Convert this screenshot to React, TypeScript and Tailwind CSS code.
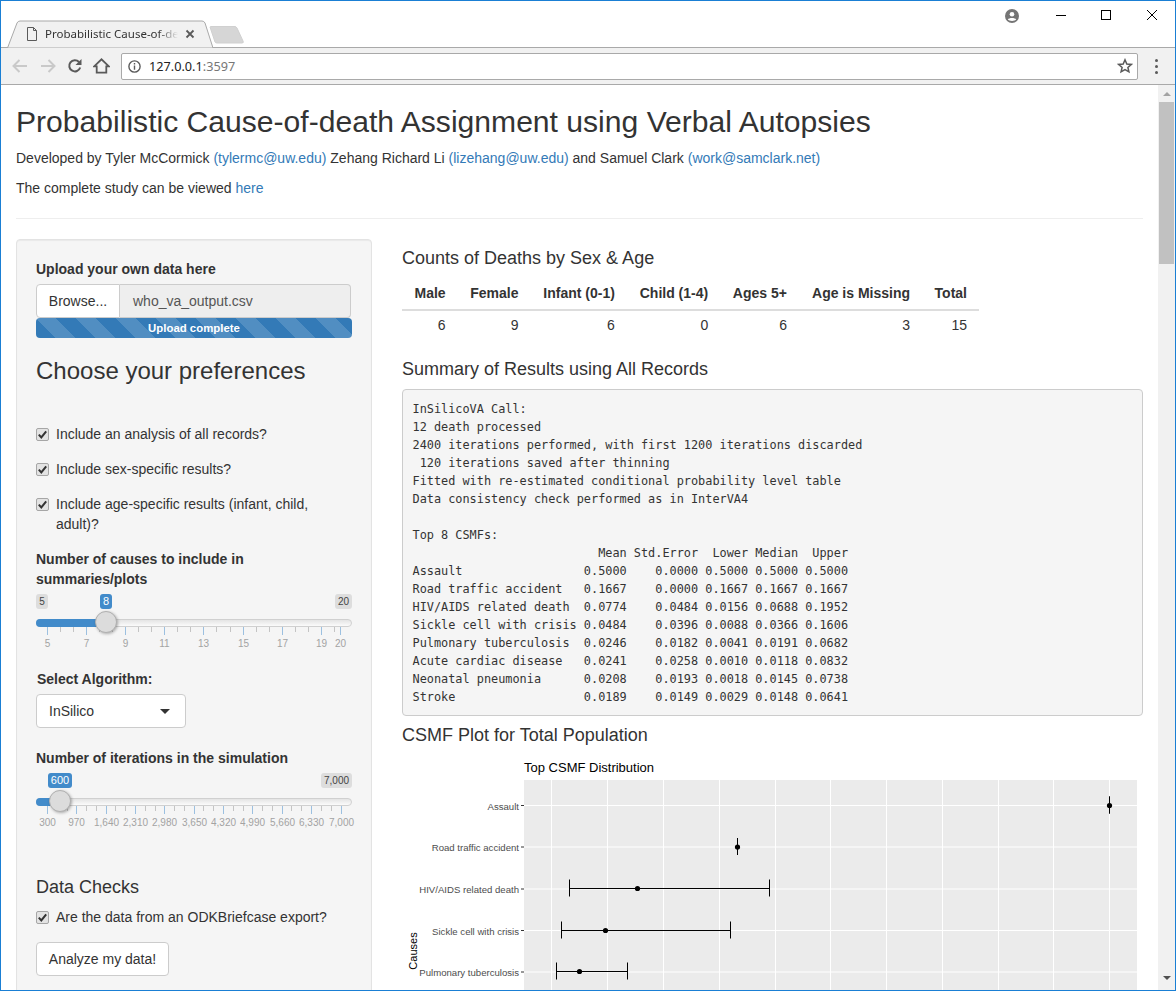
import React from "react";

const sans = "font-['Liberation_Sans',Arial,sans-serif]";

function Check({ label }: { label: React.ReactNode }) {
  return (
    <div className="flex items-start text-sm leading-5 text-[#333]">
      <span className="mt-1 mr-[7px] flex h-[13px] w-[13px] shrink-0 items-center justify-center rounded-[2px] border border-[#a6a6a6] bg-[#e3e3e3]">
        <svg viewBox="0 0 11 11" className="h-[11px] w-[11px]">
          <path d="M1.8 5.6 L4.3 8.4 L9.2 2.4" fill="none" stroke="#333" strokeWidth="2" />
        </svg>
      </span>
      <span>{label}</span>
    </div>
  );
}

type Mark = { x: number; t: string };

function Slider({
  minLabel,
  maxLabel,
  minW,
  maxW,
  val,
  valX,
  valW,
  handle,
  marks,
  minors,
}: {
  minLabel: string;
  maxLabel: string;
  minW: number;
  maxW: number;
  val: string;
  valX: number;
  valW: number;
  handle: number;
  marks: Mark[];
  minors: number[];
}) {
  return (
    <div className="relative h-[58px] w-[316px] text-[10px] leading-[15px]">
      {minLabel && <span className="absolute left-0 top-0 rounded-[3px] bg-[#ddd] text-center text-[#444]" style={{ width: minW }}>{minLabel}</span>}
      <span className="absolute right-0 top-0 rounded-[3px] bg-[#ddd] text-center text-[#444]" style={{ width: maxW }}>{maxLabel}</span>
      <span className="absolute top-0 rounded-[3px] bg-[#428bca] text-center text-[11px] text-white" style={{ left: valX, width: valW }}>{val}</span>
      <div className="absolute left-0 right-0 top-[25px] h-2 rounded-[4px] border border-[#d0d0d0] bg-gradient-to-b from-[#e4e4e4] to-[#fbfbfb]" />
      <div className="absolute left-0 top-[25px] h-2 rounded-l-[4px] bg-[#428bca]" style={{ width: handle }} />
      {minors.map((x) => (
        <div key={x} className="absolute top-[33px] h-[5px] w-px bg-[#c4c4c4]" style={{ left: x }} />
      ))}
      {marks.map((m) => (
        <React.Fragment key={m.t}>
          <div className="absolute top-[33px] h-2 w-px bg-[#9cc0e0]" style={{ left: m.x }} />
          <span className="absolute top-[42px] w-10 -translate-x-1/2 text-center text-[#a3a3a3]" style={{ left: m.x + 0.5 }}>{m.t}</span>
        </React.Fragment>
      ))}
      <div
        className="absolute top-[17px] h-[22px] w-[22px] -translate-x-1/2 rounded-full border border-[#b0b0b0] bg-[#dcdcdc] shadow-[1px_1px_3px_rgba(0,0,0,0.3)]"
        style={{ left: handle }}
      />
    </div>
  );
}

const m1: Mark[] = [
  { x: 11, t: "5" },
  { x: 50, t: "7" },
  { x: 89, t: "9" },
  { x: 128, t: "11" },
  { x: 167, t: "13" },
  { x: 207, t: "15" },
  { x: 246, t: "17" },
  { x: 285, t: "19" },
  { x: 304, t: "20" },
];
const m1Minor = [24, 37, 63, 76, 102, 115, 141, 154, 180, 194, 220, 233, 259, 272, 298];
const m2Labels = ["300", "970", "1,640", "2,310", "2,980", "3,650", "4,320", "4,990", "5,660", "6,330", "7,000"];
const m2: Mark[] = m2Labels.map((t, i) => ({ x: Math.round(11 + i * 29.35), t }));
const m2Minor = Array.from({ length: 30 }, (_, i) => Math.round(11 + (i + 1) * 9.78)).filter((_, i) => (i + 1) % 3 !== 0);

const rows = [
  "InSilicoVA Call:",
  "12 death processed",
  "2400 iterations performed, with first 1200 iterations discarded",
  " 120 iterations saved after thinning",
  "Fitted with re-estimated conditional probability level table",
  "Data consistency check performed as in InterVA4",
  "",
  "Top 8 CSMFs:",
  "                          Mean Std.Error  Lower Median  Upper",
  "Assault                 0.5000    0.0000 0.5000 0.5000 0.5000",
  "Road traffic accident   0.1667    0.0000 0.1667 0.1667 0.1667",
  "HIV/AIDS related death  0.0774    0.0484 0.0156 0.0688 0.1952",
  "Sickle cell with crisis 0.0484    0.0396 0.0088 0.0366 0.1606",
  "Pulmonary tuberculosis  0.0246    0.0182 0.0041 0.0191 0.0682",
  "Acute cardiac disease   0.0241    0.0258 0.0010 0.0118 0.0832",
  "Neonatal pneumonia      0.0208    0.0193 0.0018 0.0145 0.0738",
  "Stroke                  0.0189    0.0149 0.0029 0.0148 0.0641",
].join("\n");

const headers = ["Male", "Female", "Infant (0-1)", "Child (1-4)", "Ages 5+", "Age is Missing", "Total"];
const values = ["6", "9", "6", "0", "6", "3", "15"];

function Chart() {
  const ox = 402;
  const oy = 755;
  const vs = [551, 607, 663, 719, 775, 830, 886, 942, 998, 1053, 1109];
  const hs = [805.5, 847, 889, 930.5, 972];
  const labels = ["Assault", "Road traffic accident", "HIV/AIDS related death", "Sickle cell with crisis", "Pulmonary tuberculosis"];
  const bars = [
    { y: 805.5, a: 1109.5, b: 1109.5, p: 1109.5 },
    { y: 847, a: 737.5, b: 737.5, p: 737.5 },
    { y: 888.5, a: 569.5, b: 769.5, p: 637.5 },
    { y: 930.5, a: 561.5, b: 730.5, p: 605.5 },
    { y: 971.5, a: 556.5, b: 627.5, p: 579.5 },
  ];
  return (
    <svg width="741" height="236" viewBox={`${ox} ${oy} 741 236`} className="block">
      <text x="524" y="772" fontSize="13" fill="#000" fontFamily="Liberation Sans">Top CSMF Distribution</text>
      <rect x="524" y="780" width="613" height="220" fill="#ebebeb" />
      {vs.map((x) => (
        <line key={x} x1={x + 0.5} x2={x + 0.5} y1="780" y2="1000" stroke="#fff" strokeWidth="1" />
      ))}
      {hs.map((y) => (
        <line key={y} x1="524" x2="1137" y1={y} y2={y} stroke="#fff" strokeWidth="1" />
      ))}
      {hs.map((y, i) => (
        <g key={i}>
          <line x1="521" x2="524" y1={y} y2={y} stroke="#333" strokeWidth="1" />
          <text x="519" y={y + 4} textAnchor="end" fontSize="9.6" fill="#4d4d4d" fontFamily="Liberation Sans">{labels[i]}</text>
        </g>
      ))}
      <text transform="translate(417,951) rotate(-90)" textAnchor="middle" fontSize="11" fill="#000" fontFamily="Liberation Sans">Causes</text>
      {bars.map((b, i) => (
        <g key={i} stroke="#000" fill="#000">
          <line x1={b.a} x2={b.b} y1={b.y} y2={b.y} strokeWidth="1" />
          <line x1={b.a} x2={b.a} y1={b.y - 9} y2={b.y + 8} strokeWidth="1" />
          <line x1={b.b} x2={b.b} y1={b.y - 9} y2={b.y + 8} strokeWidth="1" />
          <circle cx={b.p} cy={b.y} r="2.6" stroke="none" />
        </g>
      ))}
    </svg>
  );
}

function BrowserChrome() {
  return (
    <div className="shrink-0">
      <div className="relative flex h-[46px] items-end bg-white">
        <div className="relative ml-[6px] flex h-[27px] w-[206px] items-center">
          <svg className="absolute inset-0" width="206" height="28" viewBox="0 0 206 28">
            <path d="M0.5 28 L10 3 Q11 1 13 1 L195 1 Q197 1 198 3 L206 28 Z" fill="#f1f1f1" stroke="#a9a9a9" strokeWidth="1" />
          </svg>
          <svg className="relative ml-[19px]" width="12" height="14" viewBox="0 0 12 14" fill="none" stroke="#5a5a5a" strokeWidth="1">
            <path d="M1.5 0.5 H7.5 L10.5 3.5 V13.5 H1.5 Z M7.5 0.5 V3.5 H10.5" />
          </svg>
          <span className="relative ml-[7px] w-[133px] overflow-hidden whitespace-nowrap font-['Noto_Sans',sans-serif] text-[11.5px] leading-[20px] text-[#333] [mask-image:linear-gradient(to_right,black_85%,transparent)]">
            Probabilistic Cause-of-de
          </span>
          <svg className="relative ml-[7px]" width="10" height="10" viewBox="0 0 10 10" stroke="#5a5a5a" strokeWidth="1.8">
            <path d="M1.5 1.5 L8.5 8.5 M8.5 1.5 L1.5 8.5" />
          </svg>
        </div>
        <svg className="ml-[-4px] mb-[3px]" width="36" height="18" viewBox="0 0 36 18">
          <path d="M1 1 Q1 0.5 2 0.5 L26 0.5 Q27 0.5 28 2 L34 15 Q35 17 33 17 L8 17 Q6.5 17 6 16 Z" fill="#d6d6d6" stroke="#d0d0d0" />
        </svg>
        <div className="absolute right-[156px] top-[8px]">
          <svg width="14" height="14" viewBox="0 0 14 14">
            <circle cx="7" cy="7" r="7" fill="#757575" />
            <circle cx="7" cy="5.2" r="2.3" fill="#fff" />
            <path d="M2.8 10.6 C4 8.6 10 8.6 11.2 10.6 C10 12.3 4 12.3 2.8 10.6 Z" fill="#fff" />
          </svg>
        </div>
        <svg className="absolute right-[17px] top-[9px]" width="102" height="11" viewBox="0 0 102 11" fill="none" stroke="#000" strokeWidth="1">
          <path d="M0 5.5 H10" />
          <rect x="45.5" y="0.5" width="9" height="9" />
          <path d="M91 0 L101 10 M101 0 L91 10" />
        </svg>
      </div>
      <div className="flex h-[38px] items-center border-t border-b border-t-[#a9a9a9] border-b-[#a9a9a9] bg-[#f1f1f1]">
        <svg className="ml-[10px]" width="18" height="16" viewBox="0 0 18 16" fill="none" stroke="#c9c9c9" strokeWidth="2">
          <path d="M16 8 H3 M8.5 2 L2.5 8 L8.5 14" />
        </svg>
        <svg className="ml-[10px]" width="18" height="16" viewBox="0 0 18 16" fill="none" stroke="#c9c9c9" strokeWidth="2">
          <path d="M2 8 H15 M9.5 2 L15.5 8 L9.5 14" />
        </svg>
        <svg className="ml-[10px]" width="16" height="16" viewBox="0 0 16 16" fill="none">
          <path d="M13.2 9.5 A5.6 5.6 0 1 1 12 4" stroke="#5a5a5a" strokeWidth="2" />
          <path d="M14.5 1 V7 H8.5 Z" fill="#5a5a5a" />
        </svg>
        <svg className="ml-[10px]" width="17" height="16" viewBox="0 0 17 16" fill="none" stroke="#5a5a5a" strokeWidth="1.8">
          <path d="M1.2 8.3 L8.5 1.3 L15.8 8.3 H13.3 V14.6 H3.7 V8.3 Z" strokeLinejoin="miter" />
        </svg>
        <div className="ml-[11px] flex h-[27px] w-[1017px] items-center rounded-[2px] border border-[#a9a9a9] bg-white">
          <svg className="ml-[6px]" width="13" height="13" viewBox="0 0 13 13" fill="none" stroke="#5a5a5a" strokeWidth="1.4">
            <circle cx="6.5" cy="6.5" r="5.6" />
            <path d="M6.5 5.5 V9.8 M6.5 3 V4.4" />
          </svg>
          <span className="ml-[8px] font-['Noto_Sans',sans-serif] text-[12.7px] text-[#222]">
            127.0.0.1<span className="text-[#777]">:3597</span>
          </span>
          <svg className="ml-auto mr-[4px]" width="16" height="16" viewBox="0 0 16 16" fill="none" stroke="#5a5a5a" strokeWidth="1.5">
            <path d="M8 1.8 L9.8 6 L14.3 6.4 L10.9 9.4 L11.9 13.8 L8 11.5 L4.1 13.8 L5.1 9.4 L1.7 6.4 L6.2 6 Z" />
          </svg>
        </div>
        <div className="ml-[17px] flex flex-col gap-[3px]">
          <span className="h-[3px] w-[3px] rounded-full bg-[#5a5a5a]" />
          <span className="h-[3px] w-[3px] rounded-full bg-[#5a5a5a]" />
          <span className="h-[3px] w-[3px] rounded-full bg-[#5a5a5a]" />
        </div>
      </div>
    </div>
  );
}

function Scrollbar() {
  return (
    <div className="flex w-[17px] shrink-0 flex-col items-center bg-[#f1f1f1]">
      <div className="mt-[7px] h-0 w-0 border-x-[4px] border-b-[4px] border-x-transparent border-b-[#a3a3a3]" />
      <div className="mt-[6px] h-[162px] w-[15px] bg-[#c1c1c1]" />
      <div className="mt-[712px] h-0 w-0 border-x-[4px] border-t-[4px] border-x-transparent border-t-[#505050]" />
    </div>
  );
}

export default function App() {
  return (
    <div className={`${sans} flex h-[991px] w-[1176px] flex-col overflow-hidden border border-[#1a7fd4] bg-white text-sm text-[#333]`}>
      <BrowserChrome />
      <div className="flex min-h-0 flex-1">
        <div className="min-w-0 flex-1 overflow-hidden px-[15px]">
          <h1 className="mt-5 text-[30.1px] leading-[33px] font-normal text-[#333]">
            Probabilistic Cause-of-death Assignment using Verbal Autopsies
          </h1>
          <p className="mt-[10px] leading-5">
            Developed by Tyler McCormick <a className="text-[#337ab7]">(tylermc@uw.edu)</a> Zehang Richard Li{" "}
            <a className="text-[#337ab7]">(lizehang@uw.edu)</a> and Samuel Clark <a className="text-[#337ab7]">(work@samclark.net)</a>
          </p>
          <p className="mt-[10px] leading-5">
            The complete study can be viewed <a className="text-[#337ab7]">here</a>
          </p>
          <hr className="mt-5 border-[#eee]" />
          <div className="mt-5 flex gap-[30px]">
            <aside className="h-[800px] w-[356px] shrink-0 rounded border border-[#e3e3e3] bg-[#f5f5f5] px-[19px] pt-[19px] shadow-[inset_0_1px_1px_rgba(0,0,0,0.05)]">
              <label className="block font-bold leading-5">Upload your own data here</label>
              <div className="mt-[5px] flex h-[34px] w-[315px]">
                <span className="flex w-[84px] items-center justify-center rounded-l border border-[#ccc] bg-white">Browse...</span>
                <span className="flex flex-1 items-center rounded-r border border-l-0 border-[#ccc] bg-[#eee] pl-[13px] text-[#555]">who_va_output.csv</span>
              </div>
              <div className="flex h-5 w-[316px] items-center justify-center rounded bg-[#337ab7] bg-[linear-gradient(45deg,rgba(255,255,255,.15)_25%,transparent_25%,transparent_50%,rgba(255,255,255,.15)_50%,rgba(255,255,255,.15)_75%,transparent_75%,transparent)] bg-[length:40px_40px] text-[11.4px] font-bold text-white">
                Upload complete
              </div>
              <h3 className="mt-5 text-2xl leading-[26px] font-normal">Choose your preferences</h3>
              <div className="mt-[40px] flex flex-col gap-[15px]">
                <Check label="Include an analysis of all records?" />
                <Check label="Include sex-specific results?" />
                <Check label={<>Include age-specific results (infant, child,<br />adult)?</>} />
              </div>
              <label className="mt-[15px] block font-bold leading-5">
                Number of causes to include in
                <br />
                summaries/plots
              </label>
              <div className="mt-[5px]">
                <Slider minLabel="5" maxLabel="20" minW={12} maxW={17} val="8" valX={64} valW={12} handle={70} marks={m1} minors={m1Minor} />
              </div>
              <label className="mt-[17px] block pl-px font-bold leading-5">Select Algorithm:</label>
              <div className="mt-[5px] flex h-[34px] w-[150px] items-center rounded border border-[#ccc] bg-white pl-3 pr-[15px]">
                <span className="flex-1">InSilico</span>
                <span className="h-0 w-0 border-x-[5px] border-t-[5px] border-x-transparent border-t-[#333]" />
              </div>
              <label className="mt-5 block font-bold leading-5">Number of iterations in the simulation</label>
              <div className="mt-[5px]">
                <Slider minLabel="" maxLabel="7,000" minW={0} maxW={31} val="600" valX={12} valW={24} handle={24} marks={m2} minors={m2Minor} />
              </div>
              <h4 className="mt-[46px] text-lg leading-5 font-normal">Data Checks</h4>
              <div className="mt-[10px]">
                <Check label="Are the data from an ODKBriefcase export?" />
              </div>
              <button className="mt-[15px] flex h-[34px] w-[133px] items-center justify-center rounded border border-[#ccc] bg-white">Analyze my data!</button>
            </aside>
            <main className="w-[741px] shrink-0">
              <h4 className="mt-[9px] text-lg leading-5 font-normal">Counts of Deaths by Sex &amp; Age</h4>
              <table className="mt-[11px] w-[577px] border-collapse">
                <thead>
                  <tr className="border-b-2 border-[#ddd]">
                    {headers.map((h) => (
                      <th key={h} className="h-[31px] px-3 pb-[2px] text-right font-bold leading-5">{h}</th>
                    ))}
                  </tr>
                </thead>
                <tbody>
                  <tr>
                    {values.map((v, i) => (
                      <td key={i} className="h-[29px] px-3 text-right leading-5">{v}</td>
                    ))}
                  </tr>
                </tbody>
              </table>
              <h4 className="mt-5 text-lg leading-5 font-normal">Summary of Results using All Records</h4>
              <pre className="mt-[10px] h-[327px] overflow-hidden rounded border border-[#ccc] bg-[#f5f5f5] px-[9.5px] pt-[10px] pb-[9px] font-['DejaVu_Sans_Mono',monospace] text-[11.87px] leading-[18px] text-[#333]">{rows}</pre>
              <h4 className="mt-[9px] text-lg leading-5 font-normal">CSMF Plot for Total Population</h4>
              <div className="mt-[10px]">
                <Chart />
              </div>
            </main>
          </div>
        </div>
        <Scrollbar />
      </div>
    </div>
  );
}
